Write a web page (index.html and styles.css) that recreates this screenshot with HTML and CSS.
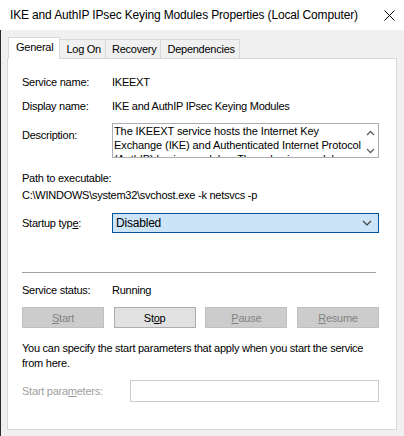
FILE: index.html
```html
<!DOCTYPE html>
<html lang="en">
<head>
  <meta charset="UTF-8">
  <title>IKEEXT Properties</title>
  <link rel="stylesheet" href="styles.css">
</head>
<body>

  <div class="ventana">
    <div class="titulo">
      <span>IKE and AuthIP IPsec Keying Modules Properties (Local Computer)</span>
      <svg class="cerrar" width="11" height="11" viewBox="0 0 11 11">
        <path d="M0.5 0.5 L10.5 10.5 M10.5 0.5 L0.5 10.5" stroke="#000" stroke-width="1" fill="none"/>
      </svg>
    </div>

    <div class="cuerpo">
      <div class="pestanas">
        <div class="pestana activa">General</div>
        <div class="pestana">Log On</div>
        <div class="pestana">Recovery</div>
        <div class="pestana">Dependencies</div>
      </div>

      <div class="panel">
        <div class="fila">
          <span class="etiqueta">Service name:</span>
          <span>IKEEXT</span>
        </div>
        <div class="fila">
          <span class="etiqueta">Display name:</span>
          <span>IKE and AuthIP IPsec Keying Modules</span>
        </div>
        <div class="fila desc">
          <span class="etiqueta">Description:</span>
          <div class="caja">
            <div class="texto">The IKEEXT service hosts the Internet Key Exchange (IKE) and Authenticated Internet Protocol (AuthIP) keying modules. These keying modules are used for authentication and key exchange in Internet Protocol security (IPsec).</div>
            <div class="scroll">
              <svg width="9" height="6" viewBox="0 0 9 6"><path d="M1 5 L4.5 1.5 L8 5" stroke="#606060" stroke-width="1.3" fill="none"/></svg>
              <svg width="9" height="6" viewBox="0 0 9 6"><path d="M1 1 L4.5 4.5 L8 1" stroke="#606060" stroke-width="1.3" fill="none"/></svg>
            </div>
          </div>
        </div>

        <div class="ruta">
          <div>Path to executable:</div>
          <div>C:\WINDOWS\system32\svchost.exe -k netsvcs -p</div>
        </div>

        <div class="fila inicio">
          <span class="etiqueta">Startup typ<u>e</u>:</span>
          <div class="selector">
            <span>Disabled</span>
            <svg width="10" height="6" viewBox="0 0 10 6"><path d="M1 1 L5 5 L9 1" stroke="#404040" stroke-width="1.2" fill="none"/></svg>
          </div>
        </div>

        <div class="linea"></div>

        <div class="fila estado">
          <span class="etiqueta">Service status:</span>
          <span>Running</span>
        </div>

        <div class="botones">
          <button disabled><u>S</u>tart</button>
          <button>St<u>o</u>p</button>
          <button disabled><u>P</u>ause</button>
          <button disabled><u>R</u>esume</button>
        </div>

        <p class="nota">You can specify the start parameters that apply when you start the service from here.</p>

        <div class="fila parametros">
          <span class="etiqueta">Start para<u>m</u>eters:</span>
          <div class="entrada"></div>
        </div>
      </div>
    </div>
  </div>

</body>
</html>
```

FILE: styles.css
```css
body {
  margin: 0;
  font-family: 'Liberation Sans', Arial, sans-serif;
  font-size: 11px;
  letter-spacing: -0.25px;
  color: #000;
  background: #f0f0f0;
}

.ventana {
  width: 404px;
  height: 436px;
  overflow: hidden;
}

.titulo {
  height: 30px;
  background: #fff;
  display: flex;
  align-items: center;
  justify-content: space-between;
  padding: 0 9px 0 10px;
  font-size: 12px;
  letter-spacing: -0.15px;
}

.cerrar {
  margin-top: 1px;
}

.cuerpo {
  height: 406px;
  border-left: 1px solid #2b2b2b;
  padding: 8px 7px 0 6px;
  box-sizing: border-box;
}

.pestanas {
  display: flex;
  align-items: flex-end;
  height: 20px;
  margin-left: 1px;
}

.pestana {
  height: 18px;
  line-height: 18px;
  padding: 0 4px 0 6px;
  border: 1px solid #d9d9d9;
  border-bottom: none;
  border-left: none;
  background: #f0f0f0;
}

.pestana.activa {
  height: 21px;
  line-height: 19px;
  background: #fff;
  border-left: 1px solid #d9d9d9;
  padding: 0 6px 0 7px;
  margin-bottom: -1px;
  position: relative;
  z-index: 1;
}

.panel {
  height: 372px;
  background: #fff;
  border: 1px solid #d9d9d9;
  box-sizing: border-box;
  padding: 16px 17px 0 14px;
}

.fila {
  display: flex;
  align-items: center;
  line-height: 15px;
}

.etiqueta {
  width: 90px;
  flex: none;
}

.fila + .fila {
  margin-top: 9px;
}

.fila.desc {
  align-items: flex-start;
  margin-top: 9px;
}

.fila.desc .etiqueta {
  padding-top: 5px;
}

.caja {
  flex: 1;
  height: 35px;
  border: 1px solid #abadb3;
  box-sizing: border-box;
  display: flex;
  overflow: hidden;
}

.texto {
  flex: 1;
  height: 33px;
  overflow: hidden;
  font-size: 11px;
  letter-spacing: -0.1px;
  line-height: 14px;
  padding-left: 1px;
}

.scroll {
  width: 15px;
  flex: none;
  display: flex;
  flex-direction: column;
  justify-content: space-between;
  align-items: center;
  padding: 6px 0 3px;
}

.scroll svg {
  display: block;
}

.ruta {
  margin-top: 12px;
  line-height: 17px;
}

.fila.inicio {
  margin-top: 9px;
}

.selector {
  flex: 1;
  height: 20px;
  background: #cce4f7;
  border: 1px solid #005499;
  box-sizing: border-box;
  display: flex;
  align-items: center;
  justify-content: space-between;
  padding: 0 6px 0 3px;
  font-size: 12px;
  letter-spacing: -0.2px;
}

.linea {
  height: 1px;
  background: #a0a0a0;
  margin: 39px 3px 0 0;
}

.fila.estado {
  margin-top: 10px;
}

.botones {
  display: flex;
  justify-content: space-between;
  margin-top: 9px;
}

button {
  width: 82px;
  height: 21px;
  font-family: inherit;
  font-size: 11px;
  letter-spacing: -0.25px;
  padding: 0;
  background: #e1e1e1;
  border: 1px solid #adadad;
  color: #000;
  border-radius: 0;
}

button:disabled {
  background: #cccccc;
  border-color: #bfbfbf;
  color: #838383;
}

.nota {
  margin: 13px 0 0;
  line-height: 14.5px;
}

.fila.parametros {
  margin-top: 10px;
}

.parametros .etiqueta {
  width: 108px;
  color: #a0a0a0;
}

.entrada {
  flex: 1;
  height: 22px;
  border: 1px solid #cccccc;
  box-sizing: border-box;
}
```
